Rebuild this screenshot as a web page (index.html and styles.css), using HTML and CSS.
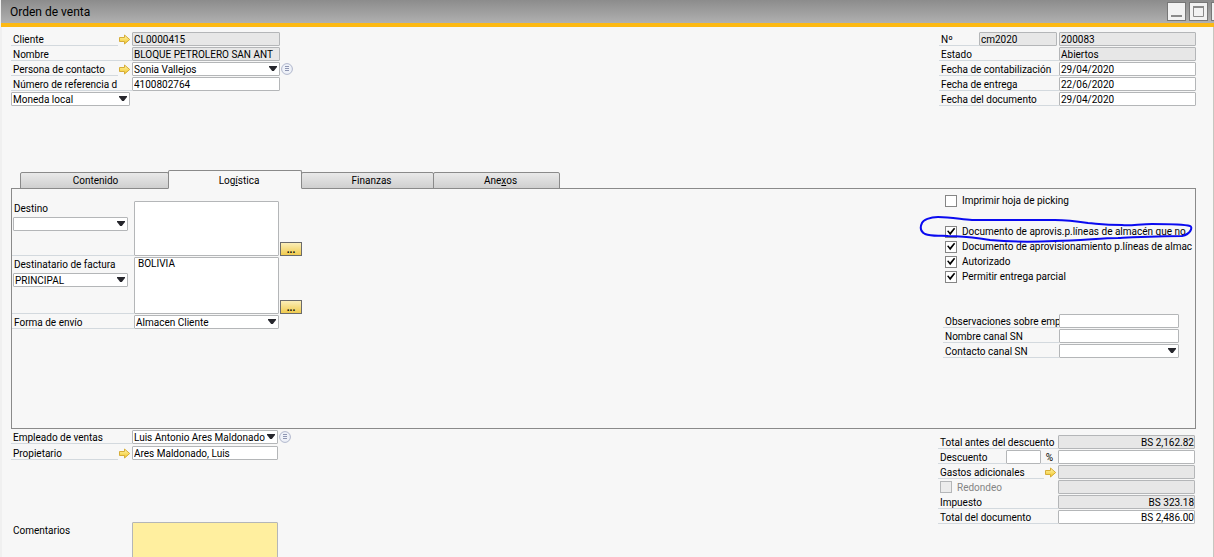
FILE: index.html
```html
<!DOCTYPE html>
<html lang="es">
<head>
    <meta charset="UTF-8">
    <meta name="viewport" content="width=device-width, initial-scale=1.0">
    <title>Orden de venta</title>
    <link rel="stylesheet" href="styles.css">
</head>
<body>
    <!-- shared icons -->
    <svg class="sprite" width="0" height="0">
        <defs>
            <linearGradient id="gold" x1="0" y1="0" x2="0" y2="1">
                <stop offset="0" stop-color="#fff6b0"/>
                <stop offset="1" stop-color="#f2c521"/>
            </linearGradient>
        </defs>
        <symbol id="arrow" viewBox="0 0 13 11">
            <path d="M1.5 3.5H6.5V1L11.7 5.5L6.5 10V7.5H1.5Z" fill="url(#gold)" stroke="#d6ad38"/>
        </symbol>
        <symbol id="list" viewBox="0 0 12 12">
            <circle cx="6" cy="6" r="5.4" fill="#eef1f8" stroke="#b0b7cc"/>
            <path d="M4 3.5H8M4 5.5H8M4 7.5H8" stroke="#8e96b2"/>
        </symbol>
    </svg>

    <header class="titlebar">
        <h1>Orden de venta</h1>
        <div class="window-buttons">
            <button type="button" aria-label="Minimizar"><svg width="17" height="17"><path d="M3 13H14" stroke="#8a8a8a" stroke-width="2"/></svg></button>
            <button type="button" aria-label="Maximizar"><svg width="17" height="17"><path d="M3.5 3V13.5H13.5V3" fill="none" stroke="#8a8a8a"/><path d="M3 4H14" stroke="#8a8a8a" stroke-width="2"/></svg></button>
            <button type="button" aria-label="Cerrar"><svg width="17" height="17"><path d="M4 4L13 13M13 4L4 13" stroke="#8a8a8a" stroke-width="2"/></svg></button>
        </div>
    </header>

    <form class="window">
        <section class="head">
            <div class="head-left">
                <div class="row">
                    <label for="cliente">Cliente</label>
                    <svg class="arrow"><use href="#arrow"/></svg>
                    <input class="field" id="cliente" type="text" value="CL0000415" readonly>
                </div>
                <div class="row">
                    <label class="wide" for="nombre">Nombre</label>
                    <input class="field" id="nombre" type="text" value="BLOQUE PETROLERO SAN ANT" readonly>
                </div>
                <div class="row">
                    <label for="contacto">Persona de contacto</label>
                    <svg class="arrow"><use href="#arrow"/></svg>
                    <span class="select field">
                        <select id="contacto"><option>Sonia Vallejos</option></select>
                    </span>
                    <button class="list-button" type="button" aria-label="Lista"><svg><use href="#list"/></svg></button>
                </div>
                <div class="row">
                    <label class="wide" for="referencia">Número de referencia d</label>
                    <input class="field" id="referencia" type="text" value="4100802764">
                </div>
                <div class="row">
                    <span class="select currency">
                        <select aria-label="Moneda"><option>Moneda local</option></select>
                    </span>
                </div>
            </div>

            <div class="side">
                <div class="row">
                    <label class="short" for="numero">Nº</label>
                    <input class="series" type="text" value="cm2020" aria-label="Serie" readonly>
                    <input class="field" id="numero" type="text" value="200083" readonly>
                </div>
                <div class="row">
                    <label for="estado">Estado</label>
                    <input class="field" id="estado" type="text" value="Abiertos" readonly>
                </div>
                <div class="row">
                    <label for="f-cont">Fecha de contabilización</label>
                    <input class="field" id="f-cont" type="text" value="29/04/2020">
                </div>
                <div class="row">
                    <label for="f-entrega">Fecha de entrega</label>
                    <input class="field" id="f-entrega" type="text" value="22/06/2020">
                </div>
                <div class="row">
                    <label for="f-doc">Fecha del documento</label>
                    <input class="field" id="f-doc" type="text" value="29/04/2020">
                </div>
            </div>
        </section>

        <nav class="tabs">
            <button class="tab tab-contents" type="button">Contenido</button>
            <button class="tab active" type="button">Log<u>í</u>stica</button>
            <button class="tab" type="button">Finanzas</button>
            <button class="tab tab-last" type="button">Ane<u>x</u>os</button>
        </nav>

        <section class="panel">
            <div class="shipping">
                <div class="address">
                    <label for="destino">Destino</label>
                    <span class="select"><select id="destino"><option></option></select></span>
                </div>
                <textarea aria-label="Dirección de destino"></textarea>
                <button class="more" type="button">...</button>

                <div class="address">
                    <label for="factura">Destinatario de factura</label>
                    <span class="select"><select id="factura"><option>PRINCIPAL</option></select></span>
                </div>
                <textarea aria-label="Dirección de factura">BOLIVIA</textarea>
                <button class="more" type="button">...</button>

                <label class="line" for="envio">Forma de envío</label>
                <span class="select"><select id="envio"><option>Almacen Cliente</option></select></span>
            </div>

            <div class="options">
                <label class="check first"><input type="checkbox"><span>Imprimir hoja de picking</span></label>
                <label class="check"><input type="checkbox" checked><span>Documento de aprovis.p.líneas de almac<u>é</u>n que no</span></label>
                <label class="check"><input type="checkbox" checked><span>Documento de aprovisionamiento p.líneas de almac</span></label>
                <label class="check"><input type="checkbox" checked><span>Autorizado</span></label>
                <label class="check"><input type="checkbox" checked><span>Permitir entrega parcial</span></label>

                <div class="channel">
                    <div class="row">
                        <label for="obs">Observaciones sobre emp</label>
                        <input class="field" id="obs" type="text">
                    </div>
                    <div class="row">
                        <label for="canal">Nombre canal SN</label>
                        <input class="field" id="canal" type="text">
                    </div>
                    <div class="row">
                        <label for="canal-contacto">Contacto canal SN</label>
                        <span class="select field"><select id="canal-contacto"><option></option></select></span>
                    </div>
                </div>

                <svg class="marker" viewBox="0 0 284 36" aria-hidden="true">
                    <path d="M57 8C45 7 35 5 23 5C15 5 8 8 7 11C5 15 5 19 10 22C18 25 26 23 33 24C50 24 60 26 75 28C95 30 120 30 140 29C165 29 185 26 203 26C225 25 245 24 267 24C276 22 278 15 275 14C268 12 250 12 237 12C225 12 215 14 207 13C190 13 185 12 173 11C160 9 150 8 140 8Z"/>
                </svg>
            </div>
        </section>

        <section class="foot">
            <div class="foot-left">
                <div class="row">
                    <label class="wide" for="empleado">Empleado de ventas</label>
                    <span class="select field">
                        <select id="empleado"><option>Luis Antonio Ares Maldonado</option></select>
                    </span>
                    <button class="list-button" type="button" aria-label="Lista"><svg><use href="#list"/></svg></button>
                </div>
                <div class="row">
                    <label for="propietario">Propietario</label>
                    <svg class="arrow"><use href="#arrow"/></svg>
                    <input class="field" id="propietario" type="text" value="Ares Maldonado, Luis">
                </div>
                <div class="comments">
                    <label for="comentarios">Comentarios</label>
                    <textarea id="comentarios"></textarea>
                </div>
            </div>

            <div class="side totals">
                <div class="row">
                    <label for="subtotal">Total antes del descuento</label>
                    <input class="field" id="subtotal" type="text" value="BS 2,162.82" readonly>
                </div>
                <div class="row">
                    <label for="descuento">Descuento</label>
                    <input class="percent" id="descuento" type="text">
                    <span class="unit">%</span>
                    <input class="field" type="text" aria-label="Importe de descuento">
                </div>
                <div class="row">
                    <label for="gastos">Gastos adicionales</label>
                    <svg class="arrow"><use href="#arrow"/></svg>
                    <input class="field" id="gastos" type="text" readonly>
                </div>
                <div class="row">
                    <label class="check disabled"><input type="checkbox" disabled><span>Redondeo</span></label>
                    <input class="field" type="text" aria-label="Importe de redondeo" readonly>
                </div>
                <div class="row">
                    <label for="impuesto">Impuesto</label>
                    <input class="field" id="impuesto" type="text" value="BS 323.18" readonly>
                </div>
                <div class="row">
                    <label for="total">Total del documento</label>
                    <input class="field" id="total" type="text" value="BS 2,486.00">
                </div>
            </div>
        </section>
    </form>
</body>
</html>
```
FILE: styles.css
```css
* {
    box-sizing: border-box;
}
html, body {
    height: 100%;
    overflow: hidden;
}
body {
    display: flex;
    flex-direction: column;
    margin: 0;
    background-color: #f0f0f0;
    color: #000;
    font: 10px/15px Roboto, "Liberation Sans", sans-serif;
}
input, select, textarea, button {
    margin: 0;
    color: inherit;
    font: inherit;
}
.sprite {
    position: absolute;
}

/* title bar */
.titlebar {
    flex: none;
    display: flex;
    justify-content: space-between;
    align-items: center;
    height: 27px;
    margin-left: 1px;
    padding-left: 9px;
    background: linear-gradient(#8c8c8c, #b0b0b0);
    border-bottom: 4px solid #fdb913;
    overflow: hidden;
}
.titlebar h1 {
    margin: 0;
    padding-top: 2px;
    font-size: 12px;
    font-weight: normal;
}
.window-buttons {
    display: flex;
    gap: 3px;
    margin-right: -16px;
}
.window-buttons button {
    width: 19px;
    height: 19px;
    padding: 0;
    background: #f2f2f2;
    border: 1px solid #777;
}
.window-buttons svg {
    display: block;
}

.window {
    flex: 1;
    margin-left: 2px;
    padding-left: 9px;
    background: #f7f7f7;
    border-right: 1px solid #c6c6c0;
}

/* label + field rows */
.row {
    display: flex;
    height: 14px;
    margin-bottom: 1px;
}
.row label {
    flex: none;
    width: 107px;
    padding-left: 2px;
    border-bottom: 1px solid #d3d9de;
    white-space: nowrap;
    overflow: hidden;
}
.row label.wide {
    width: 121px;
}
.arrow {
    flex: none;
    width: 13px;
    height: 11px;
    margin: 2px 1px 0 0;
}
input[type="text"], select, textarea {
    padding: 0 1px;
    background: #fff;
    border: 1px solid #b4b6b8;
    border-radius: 1px;
    outline: none;
}
input[type="text"][readonly] {
    background: #e7e7e7;
}
.field {
    flex: none;
    width: 148px;
}
.select {
    position: relative;
    display: block;
    height: 14px;
}
.select select {
    display: block;
    width: 100%;
    height: 14px;
    padding: 1px 12px 0 1px;
    line-height: 12px;
    appearance: none;
}
.select::after {
    content: "";
    position: absolute;
    top: 4px;
    right: 3px;
    width: 8px;
    height: 5px;
    background: #26262c;
    clip-path: polygon(0 0, 100% 0, 100% 20%, 60% 100%, 40% 100%, 0 20%);
    pointer-events: none;
}
.list-button {
    width: 12px;
    height: 12px;
    margin: 1px 0 0 1px;
    padding: 0;
    background: none;
    border: none;
}
.list-button svg {
    display: block;
    width: 12px;
    height: 12px;
}

/* header */
.head {
    display: flex;
    justify-content: space-between;
    min-height: 143px;
    padding: 5px 17px 0 0;
}
.currency {
    width: 119px;
}
.side .row {
    justify-content: flex-end;
}
.side .row label {
    flex: 1;
    width: auto;
}
.side {
    width: 257px;
}
.side .field {
    width: 137px;
}
.side .row label.short {
    flex: none;
    width: 40px;
}
.series {
    width: 78px;
    margin-right: 2px;
}

/* tabs */
.tabs {
    display: flex;
    align-items: flex-end;
    height: 19px;
    margin-bottom: -1px;
    padding-left: 9px;
}
.tab {
    width: 133px;
    height: 17px;
    margin-left: -1px;
    padding: 0 0 0 8px;
    background: linear-gradient(#e9e9e9, #cfcfcf);
    border: 1px solid #8a8a8a;
    border-radius: 2px 2px 0 0;
}
.tab.active {
    position: relative;
    width: 134px;
    height: 19px;
    padding-top: 2px;
    background: #f7f7f7;
    border-bottom-color: #f7f7f7;
}
.tab-contents {
    width: 149px;
    margin-left: 0;
    padding-left: 2px;
}
.tab-last {
    width: 127px;
}

/* logistics panel */
.panel {
    display: flex;
    justify-content: space-between;
    min-height: 241px;
    margin-right: 17px;
    border: 1px solid #8a8a8a;
}
.shipping {
    display: grid;
    grid-template-columns: 122px 145px 23px;
    grid-template-rows: 55px 57px 14px;
    row-gap: 1px;
    padding-top: 12px;
}
.shipping textarea {
    padding: 0 3px;
    line-height: 12px;
    resize: none;
}
.address {
    display: flex;
    flex-direction: column;
    gap: 1px;
    border-bottom: 1px solid #d3d9de;
}
.address label, .line {
    padding-left: 2px;
}
.address .select {
    width: 115px;
    margin-left: 1px;
}
.line {
    border-bottom: 1px solid #d3d9de;
}
.more {
    align-self: end;
    height: 14px;
    margin-left: 1px;
    padding: 0;
    background: linear-gradient(#fbeeb8, #f0cb4e);
    border: 1px solid #6b6b6b;
    line-height: 9px;
    font-weight: bold;
}
.options {
    position: relative;
    width: 248px;
    margin-right: 4px;
    padding-top: 4px;
}
.check {
    display: flex;
    align-items: center;
    gap: 5px;
    height: 15px;
    padding-left: 2px;
    white-space: nowrap;
}
.check.first {
    margin-bottom: 16px;
}
.check input {
    flex: none;
    display: grid;
    width: 12px;
    height: 12px;
    margin: 0;
    background: #fff;
    border: 1px solid #858585;
    appearance: none;
}
.check input:checked::before {
    content: "";
    background: #000;
    clip-path: polygon(10% 45%, 25% 40%, 40% 60%, 80% 12%, 92% 22%, 42% 88%);
}
.channel {
    margin-top: 30px;
}
.channel .row label {
    width: 116px;
}
.channel .field {
    width: 120px;
}
.marker {
    position: absolute;
    top: 23px;
    left: -28px;
    width: 284px;
    height: 36px;
    fill: none;
    stroke: #0a0af0;
    stroke-width: 2;
    pointer-events: none;
}

/* footer */
.foot {
    display: flex;
    justify-content: space-between;
    padding: 1px 18px 0 0;
}
.foot-left .row {
    margin-bottom: 2px;
}
.foot-left .field {
    width: 146px;
}
.comments {
    display: flex;
    margin-top: 62px;
}
.comments label {
    width: 121px;
    padding: 1px 0 0 2px;
}
.comments textarea {
    width: 146px;
    height: 60px;
    background: #ffef9f;
    resize: none;
}
.totals {
    padding-top: 5px;
}
.totals .field {
    padding-right: 0;
    text-align: right;
}
.percent {
    width: 35px;
}
.unit {
    width: 17px;
    text-align: center;
    border-bottom: 1px solid #d3d9de;
}
.side .row .disabled {
    height: 14px;
    color: #858585;
    border-bottom: none;
}
.disabled input {
    background: #ececec;
    border-color: #b4b6b8;
}
```
